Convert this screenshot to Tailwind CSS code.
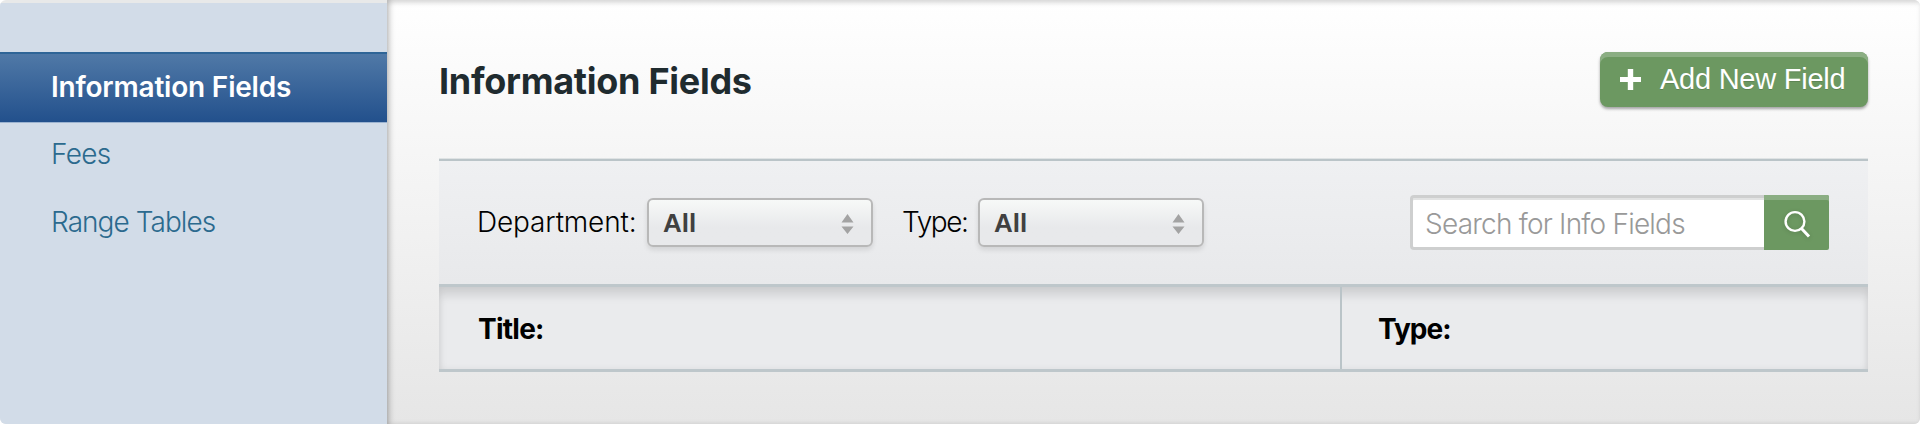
<!DOCTYPE html>
<html lang="en">

<head>
    <meta charset="UTF-8">
    <meta name="viewport" content="width=device-width, initial-scale=1.0">
    <title>Information Fields</title>
    <script src="https://cdn.jsdelivr.net/npm/@tailwindcss/browser@4"></script>
</head>

<body class="h-[425px] overflow-hidden bg-white font-['Inter',sans-serif] text-[28px] leading-[34px]">

    <div class="flex h-[424px] overflow-hidden rounded-md bg-[#e8e9e9]">

        <!-- Sidebar -->
        <aside class="mt-[3px] w-[387px] shrink-0 bg-[#d2dce8] pt-[49px] font-light text-[#2b6a8e]">
            <nav class="flex flex-col">
                <a href="#" class="flex h-[70px] items-center border-t-2 border-[#2f6597] bg-linear-to-b from-[#5079a7] to-[#22508c] pb-[3px] pl-[51px] font-semibold tracking-[-0.2px] text-white shadow-[0_1px_0_#9cb3d0]">
                    Information Fields
                </a>
                <a href="#" class="mt-[15px] pl-[51px] tracking-[-0.7px]">Fees</a>
                <a href="#" class="mt-[34px] pl-[51px] tracking-[-0.95px]">Range Tables</a>
            </nav>
        </aside>

        <!-- Main content -->
        <main class="flex-1 bg-linear-to-b from-white to-[#e6e6e6] pt-[52px] pr-[52px] pl-[52px] shadow-[inset_4px_0_6px_-2px_rgba(0,0,0,0.25),inset_0_4px_4px_rgba(0,0,0,0.09)]">

            <div class="flex h-[107px] items-start justify-between">
                <h1 class="pt-2 text-[36px] leading-[42px] font-bold tracking-[-0.28px] text-[#1f2b2f]">Information Fields</h1>
                <button class="flex h-[55px] w-[268px] items-center rounded-lg bg-[#6c9861] pl-5 font-['Liberation_Sans',sans-serif] text-white shadow-[inset_0_5px_0_#8bae83,0_2px_3px_rgba(0,0,0,0.35)]">
                    <svg class="h-[21px] w-[21px]" viewBox="0 0 21 21" fill="currentColor">
                        <path d="M7.8 0h5.4v8H21v5h-7.8v8H7.8v-8H0V8h7.8z" />
                    </svg>
                    <span class="ml-[19px] pb-px text-[29px] tracking-[-0.25px] text-shadow-2xs">Add New Field</span>
                </button>
            </div>

            <!-- Filters -->
            <div class="flex h-[125px] items-start border-t-2 border-[#bac4c8] bg-linear-to-b from-[#eff0f2] to-[#e8e9eb] pr-[39px] pl-[38px] shadow-[0_-1px_0_#dfe3e4]">
                <span class="w-[170px] pt-[44px] font-light tracking-[-0.15px]">Department:</span>
                <div class="mt-[37px] flex h-[49px] w-[226px] items-center justify-between rounded-md border-2 border-[#b8b8b8] bg-linear-to-b from-[#f7f9f8] to-[#e8e9eb] to-60% pr-[17px] pl-[14px] font-['Liberation_Sans',sans-serif] text-[26px] font-bold text-[#404040] shadow-[0_3px_5px_rgba(0,0,0,0.1)]">
                    All
                    <svg class="mt-0.5 h-5 w-[13px]" viewBox="0 0 13 20" fill="#a3a3a3">
                        <path d="M6.5 0l6 8.5H.5zM6.5 20l6-7.5H.5z" />
                    </svg>
                </div>
                <span class="ml-[29px] w-[76px] pt-[44px] font-light tracking-[-1.4px]">Type:</span>
                <div class="mt-[37px] flex h-[49px] w-[226px] items-center justify-between rounded-md border-2 border-[#b8b8b8] bg-linear-to-b from-[#f7f9f8] to-[#e8e9eb] to-60% pr-[17px] pl-[14px] font-['Liberation_Sans',sans-serif] text-[26px] font-bold text-[#404040] shadow-[0_3px_5px_rgba(0,0,0,0.1)]">
                    All
                    <svg class="mt-0.5 h-5 w-[13px]" viewBox="0 0 13 20" fill="#a3a3a3">
                        <path d="M6.5 0l6 8.5H.5zM6.5 20l6-7.5H.5z" />
                    </svg>
                </div>
                <form class="mt-[34px] ml-auto flex">
                    <input type="text" placeholder="Search for Info Fields"
                        class="h-[55px] w-[354px] rounded-l-sm border-y-3 border-l-3 border-[#cecfcf] bg-white pt-[3px] pl-[12px] font-light tracking-[-0.78px] shadow-[inset_0_2px_0_#e2e3e3] placeholder:text-[#999999] focus:outline-none">
                    <button type="button" class="flex h-[55px] w-[65px] items-center justify-center rounded-r-xs bg-[#6c9861] text-white shadow-[inset_0_5px_0_#8bae83]">
                        <svg class="mt-0.5 h-7 w-7 drop-shadow-sm" viewBox="0 0 28 28" fill="none" stroke="currentColor" stroke-width="2.4">
                            <circle cx="12" cy="11.5" r="9.4" />
                            <path d="M18.5 18.5l7.5 8" stroke-width="3" />
                        </svg>
                    </button>
                </form>
            </div>

            <!-- Table header -->
            <div class="flex h-[88px] border-y-3 border-[#bec7cb] bg-[#eaebed] font-bold shadow-[inset_0_9px_8px_rgba(0,0,0,0.1),inset_0_0_7px_rgba(0,0,0,0.06)]">
                <div class="w-[903px] border-r-2 border-[#bac4c8] pt-[25px] pl-[39px] tracking-[-0.75px]">Title:</div>
                <div class="pt-[25px] pl-[36px] tracking-[-1px]">Type:</div>
            </div>
        </main>
    </div>
</body>

</html>
